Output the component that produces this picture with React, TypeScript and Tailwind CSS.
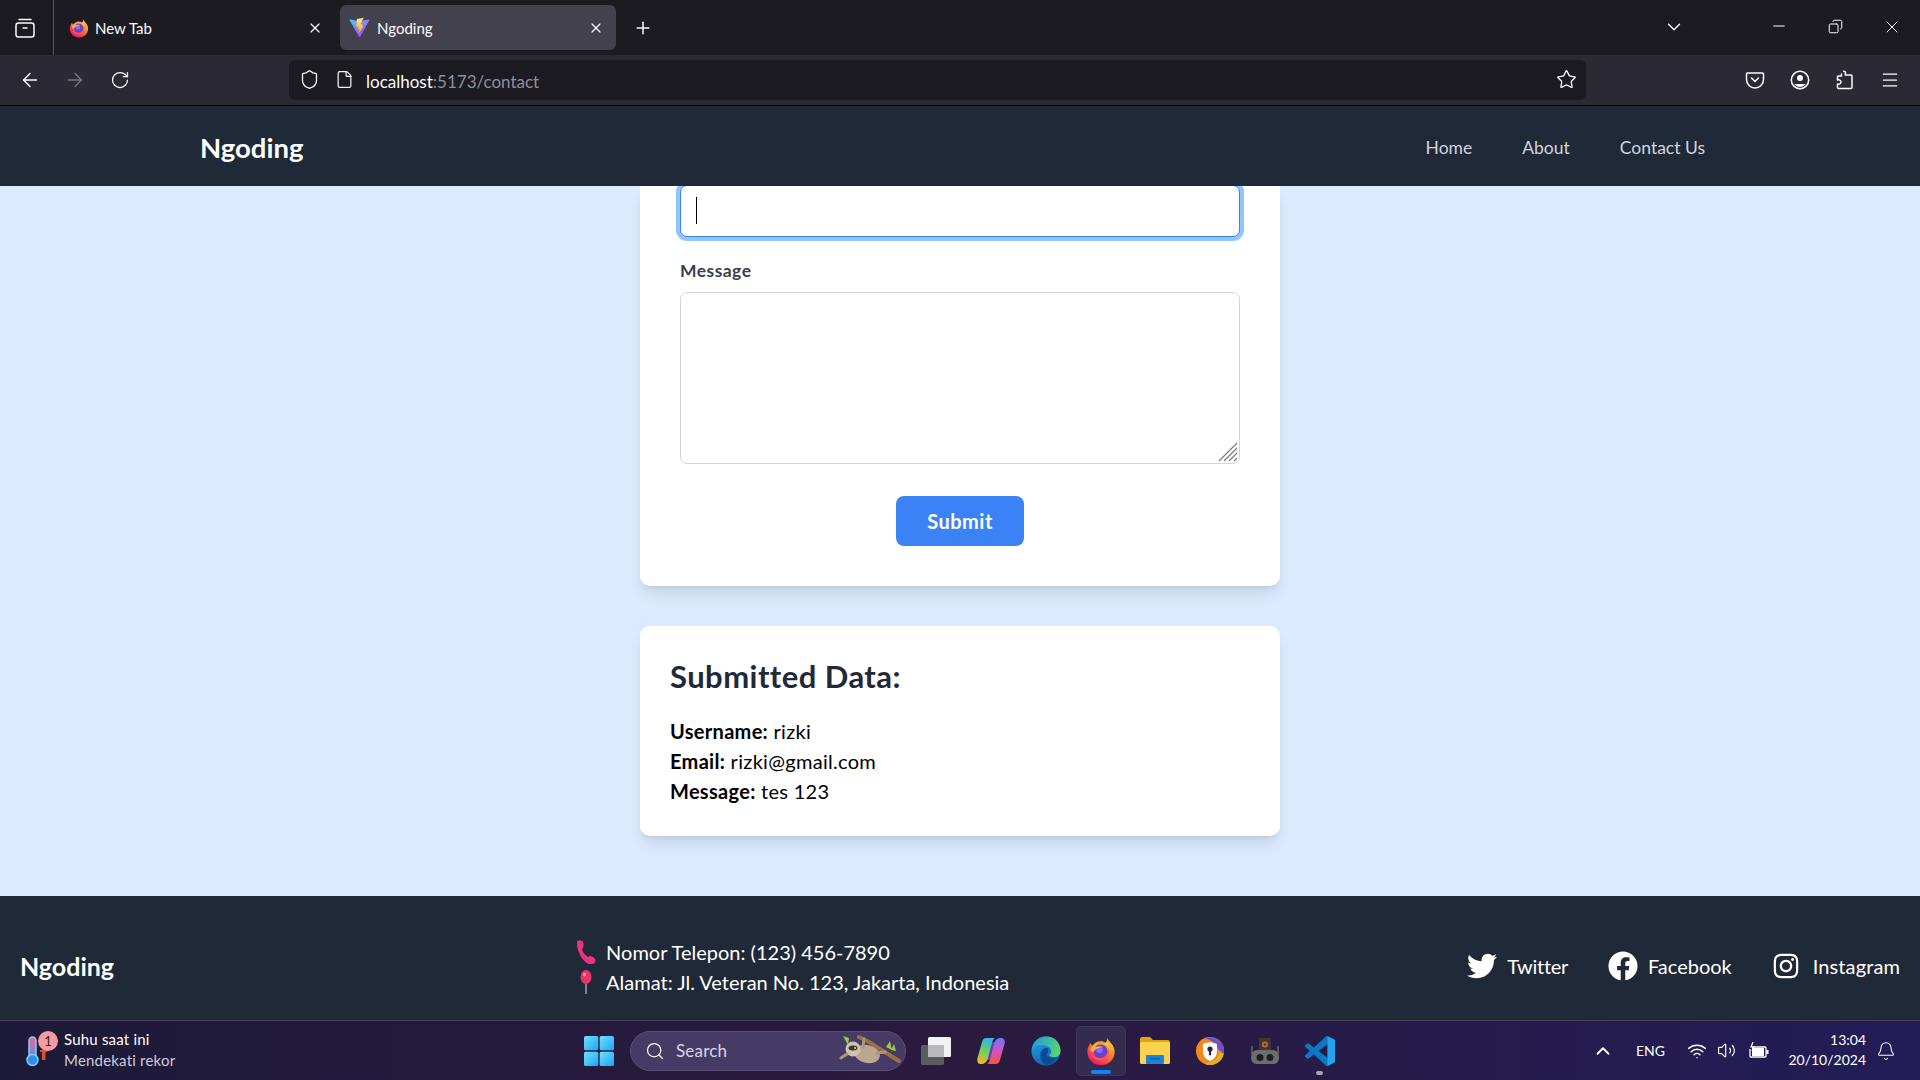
import { FaFacebook, FaInstagram, FaTwitter } from "react-icons/fa";
import { ArrowLeft, ArrowRight, ChevronDown, ChevronUp, Menu, Minus, Plus, RotateCw, Search, Shield, Star, Volume2, Wifi, X, Bell, File, Copy } from "lucide-react";

function FirefoxLogo({ size = 20, id }: { size?: number; id: string }) {
    return (
        <svg width={size} height={size} viewBox="0 0 32 32">
            <defs>
                <linearGradient id={id} x1="0.85" y1="0.05" x2="0.25" y2="0.95">
                    <stop offset="0" stopColor="#ffd52e" />
                    <stop offset="0.4" stopColor="#ff8a2b" />
                    <stop offset="1" stopColor="#f5156c" />
                </linearGradient>
            </defs>
            <path d="M22.500 1C23 4 25 5.500 27 8c2.500 3 3.500 6 3.500 9 0 8-6.500 14-14.500 14S1.500 25 1.500 17c0-4 1.500-7.500 3.500-9.500.5 1.500 1 2.500 2 3C9 7 12 5.500 15.500 5.500c2 0 4 .7 5.500 1.700C22.500 5.500 23 3.500 22.500 1z" fill={`url(#${id})`} />
            <circle cx="15.500" cy="16.500" r="7.500" fill="#6a3fd6" />
            <circle cx="14.500" cy="15" r="3.500" fill="#8f6bf0" />
            <path d="M24.500 13c1.500 7-3.500 13-9.500 13-5 0-9-3-10-8 2.500 3.500 5.500 5.500 10 5.500 5.500 0 9-5 9.500-10.500z" fill="#ff5a3c" />
            <path d="M4.500 15.500C5.500 10 10 7.500 14.500 7.500c-2.500 1-4 2.500-4.500 4.500 3-1.500 6-1.500 8.500 0-4.500 0-9 1.500-10.500 5.500-1-1-2.200-1.700-3.500-2z" fill="#ffb03a" />
            <path d="M21 7.200c2.500 1.800 4.500 4.500 5 8.300-1.200-3-3-5.500-6-7z" fill="#ffd84a" />
        </svg>
    );
}

function ViteLogo() {
    return (
        <svg width="21" height="21" viewBox="0 0 32 32">
            <defs>
                <linearGradient id="viteA" x1="0" y1="0" x2="0.7" y2="1">
                    <stop offset="0" stopColor="#41d1ff" />
                    <stop offset="1" stopColor="#bd34fe" />
                </linearGradient>
                <linearGradient id="viteB" x1="0.4" y1="0" x2="0.5" y2="1">
                    <stop offset="0" stopColor="#ffea83" />
                    <stop offset="1" stopColor="#ffa800" />
                </linearGradient>
            </defs>
            <path d="M31 5 16.800 30.500c-.3.500-1 .5-1.300 0L1 5c-.3-.6.200-1.200.8-1.100L16 6.400l14.200-2.500c.6-.1 1.100.5.800 1.100z" fill="url(#viteA)" />
            <path d="M22.500 1 12 3l-.7 12 3-.7-.8 4.500 2.700-.7-1.300 7 7.500-11.500-3 .6 1-3.500-3 .5z" fill="url(#viteB)" />
        </svg>
    );
}

function WindowsLogo() {
    return (
        <svg width="30" height="30" viewBox="0 0 30 30" className="shrink-0">
            <defs>
                <linearGradient id="winA" x1="0" y1="0" x2="1" y2="1">
                    <stop offset="0" stopColor="#6fe2fb" />
                    <stop offset="1" stopColor="#1aa5f5" />
                </linearGradient>
            </defs>
            <rect x="0" y="0" width="14.300" height="14.300" rx="1.500" fill="url(#winA)" />
            <rect x="15.700" y="0" width="14.300" height="14.300" rx="1.500" fill="url(#winA)" />
            <rect x="0" y="15.700" width="14.300" height="14.300" rx="1.500" fill="url(#winA)" />
            <rect x="15.700" y="15.700" width="14.300" height="14.300" rx="1.500" fill="url(#winA)" />
        </svg>
    );
}

function SlothBadge() {
    return (
        <svg width="62" height="36" viewBox="0 0 62 36" className="shrink-0">
            <path d="M20 4 L30 9 L60 28" stroke="#9a6f44" strokeWidth="4" strokeLinecap="round" fill="none" />
            <path d="M4 3l6 2-1 7zM51 8l2 9-6-3zM55 11l2 7-5-1z" fill="#9cc93c" />
            <ellipse cx="28" cy="21" rx="13" ry="9" transform="rotate(12 28 21)" fill="#b8a892" />
            <circle cx="14" cy="16" r="7.500" fill="#cfc3b0" />
            <ellipse cx="14" cy="15" rx="4.500" ry="2.500" fill="#3e3428" />
            <circle cx="16" cy="15" r="1" fill="#e8e0d4" />
            <path d="M24 14 L25 6M38 20 L46 19M8 21 L2 25" stroke="#a8977f" strokeWidth="3" strokeLinecap="round" />
        </svg>
    );
}

function TaskViewIcon() {
    return (
        <svg width="30" height="28" viewBox="0 0 30 28">
            <rect x="7" y="0" width="23" height="20" rx="1.500" fill="#f2f2f4" />
            <rect x="0" y="8" width="23" height="20" rx="1.500" fill="#5b5a5e" />
            <rect x="7" y="8" width="16" height="12" fill="#b9b8bb" />
        </svg>
    );
}

function CopilotIcon() {
    return (
        <svg width="28" height="28" viewBox="0 0 28 28">
            <defs>
                <linearGradient id="copA" x1="0.5" y1="0" x2="0.3" y2="1">
                    <stop offset="0" stopColor="#2fb4f0" />
                    <stop offset="0.5" stopColor="#6fd25a" />
                    <stop offset="1" stopColor="#f7b52a" />
                </linearGradient>
                <linearGradient id="copB" x1="0.5" y1="0" x2="0.5" y2="1">
                    <stop offset="0" stopColor="#f2563f" />
                    <stop offset="0.5" stopColor="#d94fc0" />
                    <stop offset="1" stopColor="#6d7af0" />
                </linearGradient>
            </defs>
            <path d="M13 5 L20 5 L15 23 L8 23z" fill="#5b3fc0" />
            <path d="M9 1h9c-2 1-2.500 3-3.300 6l-3.700 14c-.8 3.500-3 6-6.500 6H3.500C1 27-.5 24 .5 21L5 5C5.700 2.500 7 1 9 1z" fill="url(#copA)" />
            <path d="M9 1h9c-2 1-2.500 3-3.300 6l-3.700 14c-.8 3.500-3 6-6.500 6H3.500C1 27-.5 24 .5 21L5 5C5.700 2.500 7 1 9 1z" transform="rotate(180 14 14)" fill="url(#copB)" />
        </svg>
    );
}

function EdgeIcon() {
    return (
        <svg width="30" height="30" viewBox="0 0 32 32">
            <defs>
                <linearGradient id="edgeA" x1="0" y1="0.2" x2="1" y2="0.6">
                    <stop offset="0" stopColor="#1b9de2" />
                    <stop offset="1" stopColor="#5bd46b" />
                </linearGradient>
                <linearGradient id="edgeB" x1="0" y1="0" x2="0.6" y2="1">
                    <stop offset="0" stopColor="#2aa5e8" />
                    <stop offset="1" stopColor="#0c5fb0" />
                </linearGradient>
            </defs>
            <circle cx="16" cy="16" r="15.500" fill="url(#edgeB)" />
            <path d="M1 14C3 5 9 .5 16 .5 25 .5 31.500 7 31.500 16c0 4-3 6.500-7 6.500-3 0-5-1-5-2.500 3-1 3-6-1-8.500C13 8.500 4 9 1 14z" fill="url(#edgeA)" />
            <path d="M10 20c0-4 3.500-7.500 8-7.500 1.500 2 .5 5.500-1.500 7.500 1.500 3 5.500 4.500 10.500 3.500-3 4.500-7 7-11 7.500-4-2-6-6-6-10.500z" fill="#0b4a94" />
        </svg>
    );
}

function FolderIcon() {
    return (
        <svg width="30" height="27" viewBox="0 0 30 27">
            <path d="M0 2c0-1 1-2 2-2h8l3 3h15c1 0 2 1 2 2v3H0z" fill="#e3a30f" />
            <rect x="0" y="5" width="30" height="22" rx="1.500" fill="#fcd34d" />
            <rect x="6" y="18" width="18" height="9" rx="1" fill="#1c84d8" />
            <rect x="10" y="21" width="10" height="1.500" fill="#0e5ea3" />
        </svg>
    );
}

function VpnIcon() {
    return (
        <svg width="28" height="28" viewBox="0 0 28 28">
            <circle cx="14" cy="14" r="14" fill="#f08a1d" />
            <path d="M9 1.200A14 14 0 0 1 28 14c0 1-.1 2-.3 3L22 12C20 6 15 3 9 1.200z" fill="#6c4fc9" />
            <path d="M27.700 17A14 14 0 0 1 9 27l7-3c4-1 7-4 8-9z" fill="#d9b32c" />
            <path d="M14 5c3.500 1 6 1.500 7 2v7c0 5-3 8.500-7 10-4-1.500-7-5-7-10V7c1-.5 3.500-1 7-2z" fill="#fbfbfe" />
            <circle cx="14" cy="12" r="2.600" fill="#2a2438" />
            <rect x="13" y="13" width="2" height="5.500" rx="1" fill="#2a2438" />
        </svg>
    );
}

function RobotIcon() {
    return (
        <svg width="28" height="26" viewBox="0 0 28 26">
            <rect x="8" y="0" width="12" height="12" rx="1" fill="#3c3838" />
            <circle cx="14" cy="6.500" r="3" fill="#c96a28" />
            <circle cx="14" cy="6.500" r="1.200" fill="#3c3838" />
            <path d="M1 8v8M27 8v8" stroke="#6a6767" strokeWidth="1.500" />
            <path d="M6 12h16c3 0 6 3 6 7s-2 7-5 7H5c-3 0-5-3-5-7s3-7 6-7z" fill="#6f6c6c" />
            <circle cx="9" cy="19.500" r="3.500" fill="#201e24" />
            <circle cx="19" cy="19.500" r="3.500" fill="#201e24" />
        </svg>
    );
}

function VscodeIcon() {
    return (
        <svg width="30" height="30" viewBox="0 0 24 24">
            <path d="M23.150 2.587L18.210.21a1.494 1.494 0 0 0-1.705.29l-9.460 8.630-4.120-3.128a.999.999 0 0 0-1.276.057L.327 7.261A1 1 0 0 0 .326 8.740L3.899 12 .326 15.260a1 1 0 0 0 .001 1.479L1.650 17.940a.999.999 0 0 0 1.276.057l4.120-3.128 9.460 8.630a1.492 1.492 0 0 0 1.704.29l4.942-2.377A1.500 1.500 0 0 0 24 20.060V3.939a1.500 1.500 0 0 0-.85-1.352zm-5.146 14.861L10.826 12l7.178-5.448v10.896z" fill="#0a78c2" />
            <path d="M18.004.1 23.150 2.587A1.500 1.500 0 0 1 24 3.939V20.060a1.500 1.500 0 0 1-.85 1.352L18.004 23.900z" fill="#22a3ec" />
        </svg>
    );
}

function PocketIcon() {
    return (
        <svg width="20" height="20" viewBox="0 0 20 20" fill="none" stroke="#fbfbfe" strokeWidth="1.500">
            <path d="M2.500 3h15c.5 0 1 .5 1 1v5.500a8.500 8.500 0 0 1-17 0V4c0-.5.500-1 1-1z" />
            <path d="M6.500 8 10 11.500 13.500 8" strokeLinecap="round" />
        </svg>
    );
}

function AccountIcon() {
    return (
        <svg width="20" height="20" viewBox="0 0 20 20" fill="none">
            <circle cx="10" cy="10" r="8.700" stroke="#fbfbfe" strokeWidth="1.500" />
            <circle cx="10" cy="8" r="3" fill="#fbfbfe" />
            <path d="M4.500 14h11c-1.200 2-3.200 3-5.500 3s-4.300-1-5.500-3z" fill="#fbfbfe" />
        </svg>
    );
}

function ExtensionIcon() {
    return (
        <svg width="20" height="20" viewBox="0 0 20 20" fill="none" stroke="#fbfbfe" strokeWidth="1.500" strokeLinejoin="round">
            <path d="M8 1.500c1.500-.5 2.500.5 2.500 1.500s-.3 1.500-.3 2H16c.7 0 1 .4 1 1v11.500c0 .6-.4 1-1 1H3.500c-.6 0-1-.4-1-1V14c1.500.5 3.500 0 3.500-2s-2-2.500-3.500-2V7c0-.6.400-1 1-1h3c0-1-.5-2 .5-2.500" />
        </svg>
    );
}

function PhoneEmoji() {
    return (
        <svg width="20" height="24" viewBox="0 0 20 24">
            <path d="M1 2c0-1 2-2 3-1.500L6.500 1c1 1 1.500 5 .5 7l-1 1c.5 3 3 6 6 8l1.500-1c1.500-.5 5 1.500 6 3.500 .5 1-.5 3-1.500 4-1.500 1-4 1.500-6.500 0C6 20 .5 11 1 2z" fill="#e9337c" />
        </svg>
    );
}

function PinEmoji() {
    return (
        <svg width="20" height="24" viewBox="0 0 20 24">
            <path d="M10 12v12" stroke="#9ca3af" strokeWidth="1.500" />
            <ellipse cx="10" cy="7" rx="5.500" ry="7" fill="#e9336a" />
            <ellipse cx="8.500" cy="4.500" rx="1.500" ry="2" fill="#f58cab" />
        </svg>
    );
}

function WeatherIcon() {
    return (
        <svg width="34" height="44" viewBox="0 0 34 44" className="shrink-0">
            <defs>
                <linearGradient id="thermo" x1="0" y1="0" x2="0" y2="1">
                    <stop offset="0" stopColor="#f2668b" />
                    <stop offset="1" stopColor="#3d9cf0" />
                </linearGradient>
            </defs>
            <rect x="6" y="8" width="7" height="24" rx="3.500" fill="url(#thermo)" stroke="#8cc8fa" strokeWidth="1.500" />
            <circle cx="9.500" cy="31" r="5.500" fill="#2f8fe8" stroke="#8cc8fa" strokeWidth="1.500" />
            <rect x="19" y="16" width="3.500" height="15" fill="#d9531e" />
            <rect x="17" y="21" width="7.500" height="2" fill="#d9531e" />
        </svg>
    );
}

function BatteryIcon() {
    return (
        <svg width="20" height="18" viewBox="0 0 20 18" fill="none">
            <path d="M3 5h13c.6 0 1 .4 1 1v8c0 .6-.4 1-1 1H2c-.6 0-1-.4-1-1V7" stroke="#fff" strokeWidth="1.300" />
            <rect x="3" y="6" width="12" height="8" fill="#fff" />
            <rect x="17.500" y="8" width="2" height="4" fill="#fff" />
            <path d="M4 0 2 5h2.500L3 9" stroke="#fff" strokeWidth="1.200" />
        </svg>
    );
}

export default function App() {
    return (
        <div className="h-[1080px] w-[1920px] overflow-hidden flex flex-col font-['Lato','Open_Sans',sans-serif] bg-[#dbeafe]">
            {/* Browser tabs */}
            <div className="h-[55px] shrink-0 bg-[#1c1b22] flex items-start text-[#fbfbfe]">
                <div className="w-[54px] h-[55px] border-r border-[#55555c] flex items-center justify-center pr-[3px]">
                    <svg width="20" height="20" viewBox="0 0 20 20" fill="none" stroke="#fbfbfe" strokeWidth="1.500">
                        <path d="M4 1.500h12" strokeLinecap="round" />
                        <rect x="1" y="5" width="18" height="14" rx="2.500" />
                        <path d="M7.500 10h5" />
                    </svg>
                </div>
                <div className="w-[276px] ml-[6px] mt-[5px] h-[45px] flex items-center pl-[9px] pr-[13px] rounded-[6px]">
                    <FirefoxLogo id="ffTab" />
                    <span className="ml-[6px] pt-px text-[15px] flex-1">New Tab</span>
                    <X size={16} strokeWidth={1.800} />
                </div>
                <div className="w-[276px] ml-[4px] mt-[5px] h-[45px] flex items-center pl-[9px] pr-[12px] rounded-[6px] bg-[#42414d]">
                    <ViteLogo />
                    <span className="ml-[7px] pt-px text-[15px] flex-1">Ngoding</span>
                    <X size={16} strokeWidth={1.800} />
                </div>
                <Plus size={20} strokeWidth={1.800} className="ml-[17px] mt-[18px]" />
                <ChevronDown size={22} strokeWidth={1.500} className="ml-[1010px] mt-[16px]" />
                <Minus size={18} strokeWidth={1.400} className="ml-[85px] mt-[17px]" />
                <Copy size={15} strokeWidth={1.600} className="ml-[40px] mt-[19px] -scale-x-100" />
                <X size={20} strokeWidth={1.200} className="ml-[39px] mt-[17px]" />
            </div>

            {/* Browser toolbar */}
            <div className="h-[51px] shrink-0 bg-[#2b2a33] border-b border-black flex items-center pb-px text-[#fbfbfe]">
                <ArrowLeft size={22} strokeWidth={1.500} className="ml-[19px]" />
                <ArrowRight size={22} strokeWidth={1.500} className="ml-[23px] text-[#7a7980]" />
                <RotateCw size={20} strokeWidth={1.500} className="ml-[24px]" />
                <div className="ml-[159px] w-[1297px] h-[40px] rounded-[6px] bg-[#1c1b22] flex items-center pl-[10px] pr-[9px]">
                    <Shield size={21} strokeWidth={1.500} />
                    <File size={19} strokeWidth={1.500} className="ml-[15px]" />
                    <span className="ml-[12px] pt-[4px] text-[17px] flex-1">
                        localhost<span className="text-[#8f8f9d]">:5173/contact</span>
                    </span>
                    <Star size={21} strokeWidth={1.500} />
                </div>
                <div className="ml-[159px] flex items-center gap-[25px]">
                    <PocketIcon />
                    <AccountIcon />
                    <ExtensionIcon />
                    <Menu size={20} strokeWidth={1.500} />
                </div>
            </div>

            {/* Navbar */}
            <nav className="h-[80px] shrink-0 bg-[#1f2937] flex items-center justify-between pt-[4px] pl-[200px] pr-[215px] relative z-10">
                <span className="text-[27.500px] font-bold text-white">Ngoding</span>
                <div className="flex items-center gap-[50px] text-[17.500px] text-[#d1d5db]">
                    <a>Home</a>
                    <a>About</a>
                    <a>Contact Us</a>
                </div>
            </nav>

            {/* Contact page, scrolled */}
            <main className="h-[710px] shrink-0 overflow-hidden flex flex-col items-center">
                <div className="w-[640px] bg-white rounded-b-[10px] shadow-lg px-10 pb-10">
                    <div className="relative">
                        <input readOnly className="block w-full h-[52px] mt-[-1px] bg-white rounded-[7px] border border-[#3b82f6] ring-[4px] ring-[#93c5fd] outline-none" />
                        <span className="absolute left-[16px] top-[12px] h-[27px] w-px bg-black" />
                    </div>
                    <label className="block mt-[20px] mb-[10px] pt-px leading-[25px] h-[25px] text-[17.500px] font-bold tracking-[0.45px] text-[#374151]">Message</label>
                    <div className="relative">
                        <textarea readOnly className="block w-full h-[172px] resize-none rounded-[7px] border border-[#d1d5db] outline-none" />
                        <svg width="20" height="20" viewBox="0 0 20 20" className="absolute right-[2px] bottom-[2px]" stroke="#7b7b7b" strokeWidth="1.200">
                            <path d="M1 19 19 1M6 19 19 6M11 19l8-8M16 19l3-3" />
                        </svg>
                    </div>
                    <div className="flex justify-center mt-[32px]">
                        <button className="w-[128px] h-[50px] rounded-[8px] bg-[#3b82f6] text-white text-[20px] font-bold tracking-[0.5px]">Submit</button>
                    </div>
                </div>

                <div className="w-[640px] mt-10 bg-white rounded-[10px] shadow-lg p-[30px]">
                    <h2 className="text-[31px] leading-[40px] font-bold tracking-[0.45px] text-[#1f2937] mb-[20px]">Submitted Data:</h2>
                    <div className="text-[20px] leading-[30px] text-black tracking-[0.3px]">
                        <p><strong>Username:</strong> rizki</p>
                        <p><strong>Email:</strong> rizki@gmail.com</p>
                        <p><strong>Message:</strong> tes 123</p>
                    </div>
                </div>
            </main>

            {/* Footer */}
            <footer className="h-[124px] shrink-0 bg-[#1f2937] flex items-center justify-between pt-[18px] px-[20px] text-white">
                <span className="text-[25px] font-bold">Ngoding</span>
                <div className="ml-[4px] text-[20px] leading-[30px]">
                    <p className="flex items-center gap-[10px]"><PhoneEmoji />Nomor Telepon: (123) 456-7890</p>
                    <p className="flex items-center gap-[10px]"><PinEmoji />Alamat: Jl. Veteran No. 123, Jakarta, Indonesia</p>
                </div>
                <div className="flex items-center gap-[40px] pb-[2px] text-[20px]">
                    <a className="flex items-center gap-[10px] tracking-[-0.3px]"><FaTwitter size={30} />Twitter</a>
                    <a className="flex items-center gap-[10px]"><FaFacebook size={30} />Facebook</a>
                    <a className="flex items-center gap-[13px] tracking-[0.1px]"><FaInstagram size={28} />Instagram</a>
                </div>
            </footer>

            {/* Windows taskbar */}
            <div className="h-[60px] shrink-0 border-t border-[#45424f] bg-gradient-to-r from-[#1d1a3a] via-[#2a1a3e] to-[#221c58] flex items-center text-white">
                <div className="w-[584px] shrink-0 pl-[23px] flex items-center">
                    <div className="relative">
                        <WeatherIcon />
                        <span className="absolute left-[15px] top-[2px] w-[20px] h-[20px] rounded-full bg-[#f99aa0] text-[#331a22] text-[13px] leading-[20px] text-center">1</span>
                    </div>
                    <div className="ml-[7px] -mt-[2px] text-[15px] leading-[21px] tracking-[0.2px]">
                        <p>Suhu saat ini</p>
                        <p className="text-[#cfcdd8]">Mendekati rekor</p>
                    </div>
                </div>
                <WindowsLogo />
                <div className="ml-[16px] w-[276px] h-[40px] shrink-0 rounded-full bg-[#463a66] border border-[#5a5078] flex items-center pl-[14px] pr-[4px]">
                    <Search size={20} strokeWidth={1.500} />
                    <span className="ml-[11px] text-[17px] tracking-[0.2px] text-[#d8d6e0] flex-1">Search</span>
                    <SlothBadge />
                </div>
                <div className="ml-[2px] flex items-center shrink-0">
                    <span className="w-[55px] flex justify-center"><TaskViewIcon /></span>
                    <span className="w-[55px] flex justify-center"><CopilotIcon /></span>
                    <span className="w-[55px] flex justify-center"><EdgeIcon /></span>
                    <span className="w-[50px] mx-[2.500px] h-[50px] rounded-[5px] bg-[#342c4e] border border-[#40385c] flex justify-center items-center relative">
                        <FirefoxLogo size={30} id="ffTask" />
                        <span className="absolute bottom-[1px] w-[20px] h-[4px] rounded-full bg-[#0a84ff]" />
                    </span>
                    <span className="w-[54px] flex justify-center"><FolderIcon /></span>
                    <span className="w-[55px] flex justify-center"><VpnIcon /></span>
                    <span className="w-[55px] flex justify-center"><RobotIcon /></span>
                    <span className="w-[55px] flex justify-center relative">
                        <VscodeIcon />
                        <span className="absolute bottom-[-9px] w-[7px] h-[4px] rounded-full bg-[#a8a6b0]" />
                    </span>
                </div>
                <ChevronUp size={22} strokeWidth={2} className="ml-[245px] shrink-0" />
                <span className="ml-[22px] text-[14px]">ENG</span>
                <Wifi size={20} strokeWidth={1.800} className="ml-[22px] shrink-0" />
                <Volume2 size={19} strokeWidth={1.500} className="ml-[10px] shrink-0" />
                <span className="ml-[13px]"><BatteryIcon /></span>
                <div className="ml-[13px] -mt-[2px] w-[84px] shrink-0 text-right text-[14px] leading-[20px]">
                    <p>13:04</p>
                    <p>20/10/2024</p>
                </div>
                <Bell size={20} strokeWidth={1.300} className="ml-[10px] shrink-0" />
            </div>
        </div>
    );
}
